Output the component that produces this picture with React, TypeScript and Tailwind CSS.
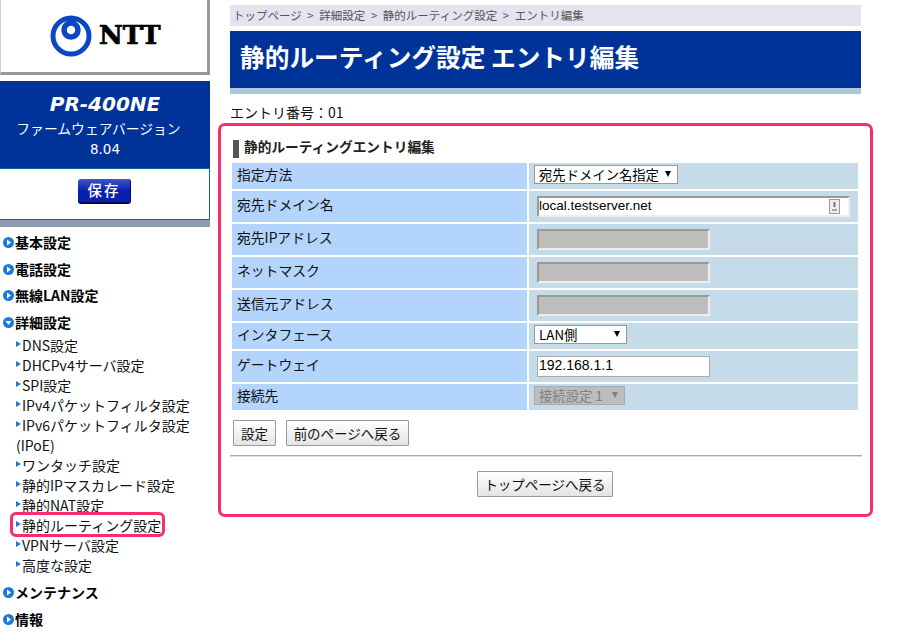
const FONT = "font-['Noto_Sans_CJK_JP','Liberation_Sans',sans-serif]";

const topNav1 = ["基本設定", "電話設定", "無線LAN設定"];
const subNav = [
  "DNS設定",
  "DHCPv4サーバ設定",
  "SPI設定",
  "IPv4パケットフィルタ設定",
  "IPv6パケットフィルタ設定",
  "ワンタッチ設定",
  "静的IPマスカレード設定",
  "静的NAT設定",
  "静的ルーティング設定",
  "VPNサーバ設定",
  "高度な設定",
];

function NttLogo() {
  return (
    <svg width="42" height="42" viewBox="0 0 42 42">
      <circle cx="21" cy="21" r="18" fill="none" stroke="#0a47c0" strokeWidth="5" />
      <circle cx="21" cy="15" r="7" fill="none" stroke="#0a47c0" strokeWidth="5.5" />
      <rect x="16" y="4" width="10" height="4" fill="#0a47c0" />
    </svg>
  );
}

function NavHead({ label, open }: { label: string; open?: boolean }) {
  return (
    <div className="flex items-center h-[17px] mb-[9.6px] pl-[3px] text-[14px] font-bold text-black leading-[17px]">
      <svg width="11" height="11" viewBox="0 0 11 11" className="mr-[1px] shrink-0">
        <circle cx="5.5" cy="5.5" r="5.5" fill="#1a7ad8" />
        {open ? <path d="M2.5 4 H8.5 L5.5 8 Z" fill="#fff" /> : <path d="M4 2.5 V8.5 L8 5.5 Z" fill="#fff" />}
      </svg>
      {label}
    </div>
  );
}

function SubItem({ label }: { label: string }) {
  return (
    <div className="relative pl-[22px] h-[20px] leading-[20px] text-[14px] text-[#111] whitespace-nowrap">
      <span className="absolute left-[16px] top-[6px] w-0 h-0 border-y-[3.5px] border-y-transparent border-l-[5px] border-l-[#1a7ad8]" />
      {label}
    </div>
  );
}

function Row({ label, h, children }: { label: string; h: string; children: React.ReactNode }) {
  return (
    <div className={`flex gap-[2px] mb-[2px] ${h}`}>
      <div className="w-[295px] bg-[#b3d4fc] pl-[5px] pb-[4px] flex items-center text-[13.8px] text-[#111]">{label}</div>
      <div className="w-[329px] bg-[#c5dbe9] flex items-center">{children}</div>
    </div>
  );
}

function SelectBox({ label, w, disabled }: { label: string; w: string; disabled?: boolean }) {
  return (
    <div className={`relative ml-[5px] mb-[4px] ${w}`}>
      <select
        disabled={disabled}
        className={`block appearance-none w-full h-[19px] pl-[4px] text-[13.33px] leading-[17px] border rounded-none ${
          disabled ? "bg-[#bdbdbd] border-[#aaa] text-[#808080]" : "bg-white border-[#999] text-black"
        }`}
      >
        <option>{label}</option>
      </select>
      <span
        className={`absolute right-[7px] top-[6px] w-0 h-0 border-x-[3.5px] border-x-transparent border-t-[6px] ${
          disabled ? "border-t-[#808080]" : "border-t-black"
        }`}
      />
    </div>
  );
}

function TextBox({ value, disabled }: { value?: string; disabled?: boolean }) {
  return (
    <input
      readOnly
      disabled={disabled}
      value={value ?? ""}
      className={`block ml-[8px] w-[173px] h-[21px] px-[1px] pb-[2px] text-[14px] font-['Liberation_Sans',sans-serif] text-black border-[2px] border-t-[#999] border-l-[#999] border-r-[#eee] border-b-[#eee] ${
        disabled ? "bg-[#bdbdbd]" : "bg-white"
      }`}
    />
  );
}

function Btn({ label, className = "" }: { label: string; className?: string }) {
  return (
    <button className={`h-[26px] border border-[#999] rounded-[1px] bg-gradient-to-b from-white to-[#e4e4e4] text-[13.5px] text-[#111] ${className}`}>
      {label}
    </button>
  );
}

export default function App() {
  return (
    <div className={`w-[901px] h-[642px] overflow-hidden bg-white flex ${FONT}`}>
      {/* sidebar */}
      <div className="w-[210px] shrink-0">
        <div className="h-[75px] bg-white border-r-[3px] border-b-[3px] border-[#999] border-l border-l-[#ccc] flex items-center gap-[7px] pl-[49px] pb-[1px]">
          <NttLogo />
          <span className="font-['DejaVu_Serif',serif] font-black text-[26px] text-black [-webkit-text-stroke:0.7px_black]">NTT</span>
        </div>
        <div className="mt-[6px] h-[87px] bg-[#003399] text-white text-center pt-[11px]">
          <div className="text-[20px] leading-[24px] font-bold italic font-['DejaVu_Sans',sans-serif]">PR-400NE</div>
          <div className="text-[13.8px] leading-[20px] mt-[2px] pr-[13px]">ファームウェアバージョン</div>
          <div className="text-[13.5px] leading-[20px] mt-[1px] font-['DejaVu_Sans',sans-serif]">8.04</div>
        </div>
        <div className="h-[52px] bg-white border-y border-r border-[#0b6a98] flex justify-center pt-[10px]">
          <button className="w-[53px] h-[25px] rounded-[3px] bg-gradient-to-b from-[#3f55c8] via-[#0a1fb0] to-[#0a1fb0] border-b-2 border-r border-[#000a50] text-white text-[14.5px] font-medium tracking-[2px] leading-none">
            保存
          </button>
        </div>
        <div className="h-[7px] bg-[#8e9bb5]" />
        <div className="mt-[7px]">
          {topNav1.map((t) => (
            <NavHead key={t} label={t} />
          ))}
          <NavHead label="詳細設定" open />
          <div className="relative -mt-[5px] mb-[9px]">
            {subNav.map((s, i) => (
              <div key={s}>
                <SubItem label={s} />
                {i === 4 && <div className="pl-[16px] h-[20px] leading-[20px] text-[14px] text-[#111]">(IPoE)</div>}
              </div>
            ))}
            <div className="absolute left-[10px] top-[177px] w-[155px] h-[25px] border-[3px] border-[#f92d6c] rounded-[6px]" />
          </div>
          <NavHead label="メンテナンス" />
          <NavHead label="情報" />
        </div>
      </div>

      {/* main */}
      <div className="ml-[20px] w-[631px] pt-[5px]">
        <div className="h-[21px] bg-[#e5e3ef] pl-[3px] text-[11.5px] leading-[21px] text-[#555] [word-spacing:3px]">
          トップページ &gt; 詳細設定 &gt; 静的ルーティング設定 &gt; エントリ編集
        </div>
        <div className="mt-[5px] h-[57px] bg-[#003399] text-white text-[24.7px] font-bold leading-[50px] pl-[10px]">
          静的ルーティング設定 エントリ編集
        </div>
        <div className="h-[6px] bg-[#afc7db]" />
        <div className="mt-[8px] h-[21px] text-[14px] leading-[21px] text-[#111]">エントリ番号：01</div>

        <div className="-ml-[12px] w-[655px] h-[394px] border-[3px] border-[#f92d6c] rounded-[7px] pl-[11px] pt-[11px]">
          <div className="flex items-center h-[23px] mb-[3px] text-[13.7px] font-bold text-[#222]">
            <span className="w-[6px] h-[18px] bg-[#555] mr-[5px] ml-[1px]" />
            <span className="-mt-[4px]">静的ルーティングエントリ編集</span>
          </div>
          <Row label="指定方法" h="h-[26px]">
            <SelectBox label="宛先ドメイン名指定" w="w-[144px]" />
          </Row>
          <Row label="宛先ドメイン名" h="h-[31px]">
            <div className="relative ml-[8px]">
              <input
                readOnly
                value="local.testserver.net"
                className="block w-[313px] h-[21px] pb-[2px] text-[13.5px] font-['Liberation_Sans',sans-serif] text-black bg-white border-[2px] border-t-[#999] border-l-[#999] border-r-[#eee] border-b-[#eee]"
              />
              <svg width="11" height="15" viewBox="0 0 11 15" className="absolute right-[10px] top-[3px]">
                <rect x="0.5" y="0.5" width="10" height="14" fill="#eee" stroke="#999" />
                <path d="M5.5 3 V8" stroke="#777" strokeWidth="2" />
                <path d="M3 10 H8 V12 H3 Z" fill="#aaa" />
              </svg>
            </div>
          </Row>
          <Row label="宛先IPアドレス" h="h-[31px]">
            <TextBox disabled />
          </Row>
          <Row label="ネットマスク" h="h-[31px]">
            <TextBox disabled />
          </Row>
          <Row label="送信元アドレス" h="h-[31px]">
            <TextBox disabled />
          </Row>
          <Row label="インタフェース" h="h-[26px]">
            <SelectBox label="LAN側" w="w-[93px]" />
          </Row>
          <Row label="ゲートウェイ" h="h-[31px]">
            <input
              readOnly
              value="192.168.1.1"
              className="block ml-[8px] w-[173px] h-[21px] px-[1px] pb-[2px] text-[14px] font-['Liberation_Sans',sans-serif] text-black bg-white border border-[#aaa]"
            />
          </Row>
          <Row label="接続先" h="h-[26px]">
            <SelectBox label="接続設定 1" w="w-[91px]" disabled />
          </Row>
          <div className="flex gap-[10px] mt-[10px] ml-[1px]">
            <Btn label="設定" className="w-[43px]" />
            <Btn label="前のページへ戻る" className="w-[123px]" />
          </div>
          <div className="mt-[9px] -ml-[2px] w-[632px] h-[2px] bg-[#aaa] border-b border-b-[#ddd]" />
          <div className="flex justify-center w-[626px] mt-[14px]">
            <Btn label="トップページへ戻る" className="w-[136px]" />
          </div>
        </div>
      </div>
    </div>
  );
}
